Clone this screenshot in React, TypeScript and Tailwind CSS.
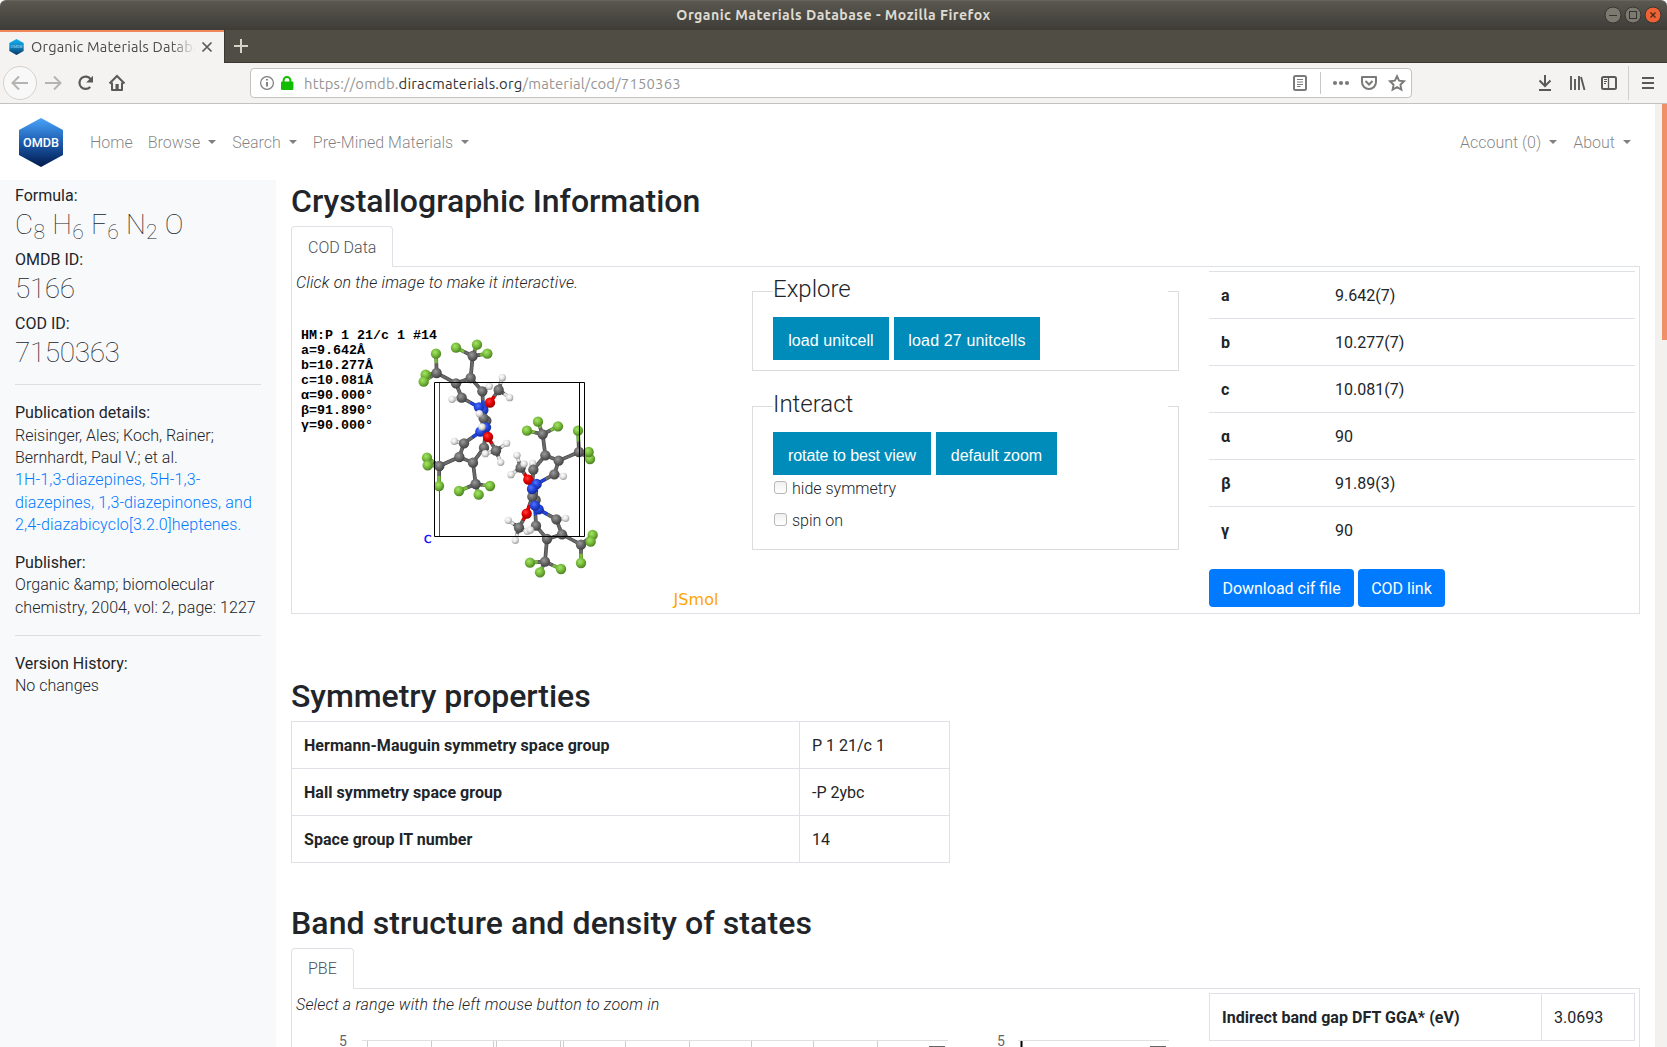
import React from 'react';

type Kind = 'C' | 'F' | 'H' | 'N' | 'O';
type Atom = [Kind, number, number];

/* Atom positions of the four molecules; bonds refer to indices in the same list. */
const ATOMS: Atom[] = [
  ['F', 168, 83], ['F', 231, 74], ['F', 262, 101], ['C', 218, 108], ['F', 108, 101],
  ['C', 110, 159], ['F', 77, 164], ['F', 71, 185], ['C', 168, 190], ['C', 212, 174],
  ['C', 185, 233], ['H', 156, 238], ['C', 247, 214], ['H', 268, 199], ['C', 296, 210],
  ['H', 307, 173], ['H', 329, 233], ['N', 250, 270], ['N', 237, 262], ['O', 270, 248],
  ['C', 259, 302], ['C', 251, 295], ['H', 238, 281],
  ['N', 258, 322], ['N', 241, 335], ['H', 246, 321], ['C', 192, 370], ['H', 163, 364], ['C', 252, 383],
  ['C', 288, 392], ['O', 264, 351], ['H', 320, 370], ['H', 256, 401], ['H', 302, 427],
  ['C', 178, 411], ['C', 219, 428], ['C', 118, 438], ['F', 81, 413], ['F', 83, 436],
  ['F', 117, 498], ['C', 227, 492], ['F', 177, 513], ['F', 270, 498], ['F', 236, 524],
  ['F', 381, 332], ['F', 414, 305], ['F', 474, 319], ['C', 428, 343], ['C', 436, 406],
  ['C', 476, 422], ['C', 537, 396], ['F', 534, 332], ['F', 570, 417], ['F', 566, 396],
  ['C', 463, 463], ['H', 490, 469], ['H', 398, 430], ['C', 400, 449], ['C', 362, 443],
  ['H', 372, 432], ['H', 351, 406], ['H', 333, 464], ['O', 385, 479], ['N', 410, 492],
  ['C', 407, 540], ['C', 397, 530], ['N', 396, 507],
  ['N', 416, 568], ['N', 405, 557], ['O', 380, 581], ['C', 357, 623], ['H', 325, 601],
  ['H', 346, 661], ['H', 382, 634], ['C', 408, 617], ['H', 391, 630], ['C', 469, 598],
  ['H', 497, 595], ['C', 486, 643], ['C', 441, 657], ['C', 543, 674], ['F', 578, 645],
  ['F', 572, 665], ['F', 543, 729], ['C', 435, 725], ['F', 390, 728], ['F', 483, 747], ['F', 420, 757],
];

const BONDS: [number, number][] = [
  [0, 3], [1, 3], [2, 3], [3, 9], [4, 5], [6, 5], [7, 5], [5, 8], [8, 9], [8, 10], [10, 11], [9, 12],
  [12, 13], [10, 18], [12, 17], [14, 15], [14, 16], [14, 19], [19, 17], [17, 20], [21, 22], [18, 21],
  [20, 23], [21, 24], [24, 26], [26, 27], [26, 34], [23, 28], [28, 35], [34, 35], [34, 36], [36, 37],
  [36, 38], [36, 39], [35, 40], [40, 41], [40, 42], [40, 43], [20, 30], [30, 29], [29, 31], [29, 32], [29, 33],
  [44, 47], [45, 47], [46, 47], [47, 48], [48, 49], [49, 50], [50, 51], [50, 52], [50, 53], [49, 54],
  [54, 55], [54, 63], [48, 57], [57, 56], [57, 66], [58, 59], [58, 60], [58, 61], [58, 62], [62, 66], [66, 65],
  [63, 64], [65, 68], [64, 67], [65, 69], [69, 70], [70, 71], [70, 72], [70, 73], [68, 74], [74, 75], [67, 76],
  [76, 77], [76, 78], [78, 79], [74, 79], [78, 80], [80, 81], [80, 82], [80, 83], [79, 84], [84, 85],
  [84, 86], [84, 87],
];

const BASE: Record<Kind, string> = { C: '#6a6a6a', F: '#79bd3c', H: '#e4e4e4', N: '#2445dc', O: '#e80000' };
const EDGE: Record<Kind, string> = { C: '#3f3f3f', F: '#4b8022', H: '#9a9a9a', N: '#132a98', O: '#960000' };
const SHINE: Record<Kind, string> = { C: '#9a9a9a', F: '#a5e466', H: '#ffffff', N: '#5573ff', O: '#ff4040' };
const RADIUS: Record<Kind, number> = { C: 15.5, F: 15.5, H: 11, N: 15.5, O: 15.5 };

const CELL_TEXT = ['HM:P 1 21/c 1 #14', 'a=9.642Å', 'b=10.277Å', 'c=10.081Å', 'α=90.000°', 'β=91.890°', 'γ=90.000°'];

function HalfBond({ x1, y1, x2, y2, kind }: { x1: number; y1: number; x2: number; y2: number; kind: Kind }) {
  return (
    <g>
      <line x1={x1} y1={y1} x2={x2} y2={y2} stroke={EDGE[kind]} strokeWidth={11} />
      <line x1={x1} y1={y1} x2={x2} y2={y2} stroke={BASE[kind]} strokeWidth={7.5} />
    </g>
  );
}

function MoleculeView() {
  return (
    <svg className="block h-[314px] w-[425px]" viewBox="296 295 425 314">
      <defs>
        {(Object.keys(BASE) as Kind[]).map((k) => (
          <radialGradient key={k} id={`atom-${k}`} cx="0.4" cy="0.36" r="0.66">
            <stop offset="0" stopColor={SHINE[k]} />
            <stop offset="0.5" stopColor={BASE[k]} />
            <stop offset="1" stopColor={EDGE[k]} />
          </radialGradient>
        ))}
      </defs>
      <g fontFamily='"Liberation Mono", monospace' fontSize="13.33" fontWeight="700" fill="#000">
        {CELL_TEXT.map((t, i) => (
          <text key={t} x="301" y={339 + i * 15}>{t}</text>
        ))}
      </g>
      <path d="M439.5 383V536" stroke="#008000" />
      <g transform="translate(400 320) scale(0.33333)">
        {BONDS.map(([a, b]) => {
          const [ka, xa, ya] = ATOMS[a];
          const [kb, xb, yb] = ATOMS[b];
          const mx = (xa + xb) / 2;
          const my = (ya + yb) / 2;
          return (
            <g key={`${a}-${b}`}>
              <HalfBond x1={xa} y1={ya} x2={mx} y2={my} kind={ka} />
              <HalfBond x1={mx} y1={my} x2={xb} y2={yb} kind={kb} />
            </g>
          );
        })}
        {ATOMS.map(([k, x, y], i) => (
          <circle key={i} cx={x} cy={y} r={RADIUS[k]} fill={`url(#atom-${k})`} />
        ))}
      </g>
      <g fill="none" stroke="#000" strokeWidth="1">
        <path d="M434.5 382.5H584.5V536.5H434.5Z" />
        <path d="M579.5 383V536" />
      </g>
      <text x="424" y="543" fontFamily='"DejaVu Sans", sans-serif' fontSize="10.5" fill="#0000ff" stroke="#0000ff" strokeWidth="0.4">C</text>
      <text x="673.500" y="605" fontFamily='"DejaVu Sans", sans-serif' fontSize="16" textLength="45" fill="#ffa500">JSmol</text>
    </svg>
  );
}

function Logo({ className, small }: { className: string; small?: boolean }) {
  const id = small ? 'logo-small' : 'logo-large';
  return (
    <svg className={className} viewBox="0 0 44 49">
      <defs>
        <linearGradient id={id} x1="0" y1="0" x2="0" y2="1">
          <stop offset="0" stopColor={small ? '#12b0ee' : '#4aa3fb'} />
          <stop offset="0.5" stopColor={small ? '#0f83c0' : '#1c5cae'} />
          <stop offset="1" stopColor={small ? '#0a3560' : '#021a4c'} />
        </linearGradient>
      </defs>
      <path d="M22 0L44 12V37L22 49L0 37V12Z" fill={`url(#${id})`} />
      <text x="22" y="29" textAnchor="middle" fontFamily="Roboto, sans-serif" fontSize="13" fontWeight={small ? 400 : 500} textLength="36" lengthAdjust="spacingAndGlyphs" fill={small ? '#9fd0ee' : '#fff'}>OMDB</text>
    </svg>
  );
}

function TitleBar() {
  return (
    <div className="bg-white">
      <div className="relative flex h-[30px] items-center justify-center rounded-t-[6px] border-t border-[#66645c] bg-linear-to-b from-[#5a5850] to-[#3d3c37]">
        <div className="mb-[2px] text-center text-[14.1px] leading-[20px] font-bold tracking-[0.48px] whitespace-nowrap text-[#dfdbd2] font-[Ubuntu,'Noto_Sans',sans-serif]">
          Organic Materials Database - Mozilla Firefox
        </div>
        <svg className="absolute top-[5px] right-[4px] h-[18px] w-[60px]" viewBox="0 0 60 18" fill="none">
          <circle cx="10" cy="9" r="8" fill="#7b7970" stroke="#35342f" />
          <path d="M6 9.500H14" stroke="#35342f" />
          <circle cx="30" cy="9" r="8" fill="#7b7970" stroke="#35342f" />
          <rect x="26.500" y="5.500" width="7" height="7" stroke="#35342f" />
          <circle cx="50" cy="9" r="8" fill="#ee6235" stroke="#35342f" />
          <path d="M47.500 6.500L52.500 11.500M52.500 6.500L47.500 11.500" stroke="#4d2a1a" strokeWidth="1.400" />
        </svg>
      </div>
    </div>
  );
}

function TabStrip() {
  return (
    <div className="flex h-[33px] border-b border-[#3a3833] bg-[#504d45]">
      <div className="-mb-px flex h-[33px] w-[224px] items-center border-t-2 border-[#f0875b] bg-[#f4f3f2] shadow-[1px_0_0_#3a3833,0_-1px_0_#46443e]">
        <Logo small className="mb-px ml-[9px] h-[16px] w-[15px]" />
        <div className="mb-px ml-[7px] w-[166px] overflow-hidden text-[14.5px] leading-[20px] tracking-[0.2px] whitespace-nowrap text-[#4a4a4a] mask-r-from-84% mask-r-to-99% font-[Ubuntu,'Noto_Sans',sans-serif]">
          Organic Materials Database
        </div>
        <svg className="mb-px ml-[4px] h-[12px] w-[12px]" viewBox="0 0 12 12" fill="none" stroke="#5a5957" strokeWidth="1.700">
          <path d="M1.500 1.500L10.500 10.500M10.500 1.500L1.500 10.500" />
        </svg>
      </div>
      <svg className="mt-[8px] ml-[10px] h-[15px] w-[15px]" viewBox="0 0 15 15" stroke="#d5d2c8" strokeWidth="2">
        <path d="M7 1V15M0 8H14" />
      </svg>
    </div>
  );
}

function Toolbar() {
  return (
    <div className="flex h-[41px] items-center border-b border-[#c3c2c0] bg-[#f4f3f2]">
      <svg className="h-[36px] w-[130px]" viewBox="0 65 130 36" fill="none">
        <circle cx="20" cy="83" r="16.500" fill="#f9f8f8" stroke="#d3d2d0" />
        <path d="M28 83H13M19 76.500L12.500 83L19 89.500" stroke="#b4b3b2" strokeWidth="2" />
        <path d="M45 83H60M54 76.500L60.500 83L54 89.500" stroke="#b4b3b2" strokeWidth="2" />
        <path d="M90.800 79.300A6.200 6.200 0 1 0 90.200 87" stroke="#5a5957" strokeWidth="2.200" />
        <path d="M93 75.800V82.500H86.200Z" fill="#5a5957" />
        <path d="M109.500 83.500L117 76L124.500 83.500" stroke="#5a5957" strokeWidth="2" />
        <path d="M112 82.500V90H122V82.500" stroke="#5a5957" strokeWidth="2" strokeLinejoin="round" />
        <rect x="115.500" y="84" width="3.200" height="6" fill="#5a5957" />
      </svg>
      <div className="ml-[120px] flex h-[30px] w-[1162px] items-center rounded-[4px] border border-[#c3c2c0] bg-white">
        <svg className="ml-[9px] h-[16px] w-[34px]" viewBox="0 0 34 16" fill="none">
          <circle cx="7" cy="8" r="6.400" stroke="#7d7d7d" strokeWidth="1.200" />
          <path d="M7 7V11.500M7 4V5.600" stroke="#6f6f6f" strokeWidth="1.700" />
          <rect x="21" y="6.500" width="12.400" height="8.500" rx="1" fill="#12bc00" />
          <path d="M23.600 7.500V5.300A3.400 3.400 0 0 1 30.400 5.300V7.500" stroke="#12bc00" strokeWidth="2" />
        </svg>
        <div className="mt-px ml-[10px] flex-1 text-[14.8px] leading-[20px] tracking-[0.21px] whitespace-nowrap text-[#969594] font-[Ubuntu,'Noto_Sans',sans-serif]">
          https://omdb.<span className="text-[#2e3436]">diracmaterials.org</span>/material/cod/7150363
        </div>
        <svg className="h-[26px] w-[120px]" viewBox="1291 70 120 26" fill="none" stroke="#7b7a79">
          <rect x="1294" y="76" width="12" height="14" rx="1.500" strokeWidth="2" />
          <path d="M1297 79.500H1303M1297 82H1303M1297 84.500H1303M1297 86.500H1300.500" />
          <path d="M1320.500 72V94" stroke="#c8c7c5" />
          <g fill="#7b7a79" stroke="none">
            <circle cx="1335" cy="83" r="2.100" />
            <circle cx="1341" cy="83" r="2.100" />
            <circle cx="1347" cy="83" r="2.100" />
          </g>
          <path d="M1362 77H1376V82A7 7 0 0 1 1362 82Z" strokeWidth="2" strokeLinejoin="round" />
          <path d="M1365.500 81L1369 84.500L1372.500 81" strokeWidth="2" />
          <path d="M1397 76.200L1399.100 80.700L1404 81.300L1400.400 84.700L1401.400 89.700L1397 87.200L1392.600 89.700L1393.600 84.700L1390 81.300L1394.900 80.700Z" strokeWidth="1.900" />
        </svg>
      </div>
      <svg className="ml-[120px] h-[36px] w-[135px]" viewBox="1532 65 135 36" fill="none" stroke="#5a5957" strokeWidth="2">
        <path d="M1545 75V86M1539.500 80.500L1545 86L1550.500 80.500M1539 90H1551" />
        <path d="M1571 76V90M1575 79V90M1579 76V90M1581 77L1584.500 90" strokeWidth="1.900" />
        <rect x="1602" y="77" width="14" height="12" rx="1.500" />
        <path d="M1608.500 77V89" strokeWidth="1.300" />
        <path d="M1604 79.500H1607M1604 81.500H1607M1604 83.500H1606" strokeWidth="1" />
        <path d="M1628.500 66V100" stroke="#d0cfcd" strokeWidth="1" />
        <path d="M1642 78H1654M1642 83H1654M1642 88H1654" />
      </svg>
    </div>
  );
}

function NavLink({ children, caret, className = 'px-2' }: { children: string; caret?: boolean; className?: string }) {
  return (
    <a className={`flex items-center whitespace-nowrap text-black/50 ${className}`}>
      <span className="pt-[2px]">{children}</span>
      {caret && <span className="ml-[8px] border-x-[4.8px] border-t-[4.8px] border-x-transparent border-t-black/50" />}
    </a>
  );
}

function Navbar() {
  return (
    <nav className="flex h-[76px] items-center bg-white pr-[16px] pl-[19px] font-light">
      <Logo className="mr-[19px] h-[49px] w-[44px]" />
      <NavLink>Home</NavLink>
      <NavLink caret className="pr-2 pl-[7px]">Browse</NavLink>
      <NavLink caret className="px-2">Search</NavLink>
      <NavLink caret className="px-2">Pre-Mined Materials</NavLink>
      <div className="flex-1" />
      <NavLink caret>Account (0)</NavLink>
      <NavLink caret>About</NavLink>
    </nav>
  );
}

function Label({ children }: { children: string }) {
  return <div className="leading-[22.4px] font-normal">{children}</div>;
}

function Big({ children, className = 'tracking-[-0.4px]' }: { children: React.ReactNode; className?: string }) {
  return <div className={`mb-[8px] h-[33.600px] pt-px text-[28px] leading-[33.600px] font-thin ${className}`}>{children}</div>;
}

function Sub({ children }: { children: string }) {
  return <sub className="relative bottom-[-0.25em] align-baseline text-[75%] leading-none">{children}</sub>;
}

function Sidebar() {
  return (
    <aside className="w-[276px] shrink-0 bg-[#f8f9fb] pt-[4.500px] pr-[14px] pl-[15px] leading-[22.4px] font-light text-[#212529]">
      <Label>Formula:</Label>
      <Big className="tracking-[0.28px]">C<Sub>8</Sub> H<Sub>6</Sub> F<Sub>6</Sub> N<Sub>2</Sub> O</Big>
      <Label>OMDB ID:</Label>
      <Big>5166</Big>
      <Label>COD ID:</Label>
      <Big>7150363</Big>
      <hr className="mt-[15px] mr-px mb-[17px] border-[#dcdee0]" />
      <Label>Publication details:</Label>
      <div className="pt-[1px]">Reisinger, Ales; Koch, Rainer;<br />Bernhardt, Paul V.; et al.</div>
      <a className="-mt-[0.600px] block tracking-[0.13px] whitespace-nowrap text-[#007bff]">
        1H-1,3-diazepines, 5H-1,3-<br />diazepines, 1,3-diazepinones, and<br />2,4-diazabicyclo[3.2.0]heptenes.
      </a>
      <div className="pt-[16px]"><Label>Publisher:</Label></div>
      <div className="-mt-[0.300px] tracking-[0.06px] whitespace-nowrap">Organic &amp;amp; biomolecular<br />chemistry, 2004, vol: 2, page: 1227</div>
      <hr className="mt-[16px] mr-px mb-[17px] border-[#dcdee0]" />
      <Label>Version History:</Label>
      <div className="-mt-[0.600px]">No changes</div>
    </aside>
  );
}

function Heading({ children, className = '' }: { children: string; className?: string }) {
  return <h2 className={`h-[38px] text-[32px] leading-[38px] font-medium whitespace-nowrap ${className}`}>{children}</h2>;
}

function Tab({ children, className }: { children: string; className: string }) {
  return (
    <div className={`relative z-10 -mb-px flex h-[41px] w-fit items-center rounded-t-[4px] border border-b-0 border-[#dee2e6] bg-white px-4 font-light text-[#495057] ${className}`}>
      {children}
    </div>
  );
}

function JmolButton({ children, className }: { children: string; className: string }) {
  return (
    <button className={`h-[43px] bg-[#008cba] pt-[4px] text-center text-[16px] whitespace-nowrap text-white font-['Liberation_Sans',Arial,sans-serif] ${className}`}>
      {children}
    </button>
  );
}

function Group({ title, className, children }: { title: string; className: string; children: React.ReactNode }) {
  return (
    <fieldset className={`w-[427px] border border-[#dcdcdc] px-[10px] font-light ${className}`}>
      <legend className="ml-[10px] h-[36px] w-[395px] text-[24px] leading-[32px]">{title}</legend>
      <div className="ml-[10px] pt-[8px]">{children}</div>
    </fieldset>
  );
}

function Check({ children }: { children: string }) {
  return (
    <label className="flex h-[32px] items-start gap-[5px] pl-px">
      <span className="mt-[6px] h-[13px] w-[13px] rounded-[3px] border-[1.500px] border-[#b9b7b5] bg-linear-to-b from-[#f0f0f0] to-white" />
      <span className="leading-[27px]">{children}</span>
    </label>
  );
}

const CELL_ROWS: [string, string][] = [
  ['a', '9.642(7)'], ['b', '10.277(7)'], ['c', '10.081(7)'], ['α', '90'], ['β', '91.89(3)'], ['γ', '90'],
];

const SYMMETRY_ROWS: [string, string][] = [
  ['Hermann-Mauguin symmetry space group', 'P 1 21/c 1'],
  ['Hall symmetry space group', '-P 2ybc'],
  ['Space group IT number', '14'],
];

function BandCharts() {
  return (
    <svg className="block h-[28px] w-[880px]" viewBox="296 1019 880 28" fill="none">
      <g fontFamily="Roboto, sans-serif" fontSize="14" fill="#666">
        <text x="339" y="1046">5</text>
        <text x="997" y="1046">5</text>
      </g>
      <path d="M362 1040.500H948M1018 1040.500H1169" stroke="#e0e0e0" />
      <path d="M367.500 1041V1047M431.500 1041V1047M493.500 1041V1047M496.500 1041V1047M560.500 1041V1047M563.500 1041V1047M625.500 1041V1047M689.500 1041V1047M751.500 1041V1047M813.500 1041V1047M877.500 1041V1047" stroke="#ccc" />
      <path d="M1021.500 1041V1047" stroke="#000" strokeWidth="2" />
      <path d="M929 1046.500H945M1150 1046.500H1166" stroke="#666" />
    </svg>
  );
}

function Main() {
  return (
    <main className="ml-[15px] w-[1349px] shrink-0 pt-[2px] text-[#212529]">
      <Heading>Crystallographic Information</Heading>
      <div className="h-[6px]" />
      <Tab className="pt-[2px]">COD Data</Tab>
      <section className="flex h-[348px] border border-[#dee2e6]">
        <div className="w-[460px] pl-[4px]">
          <div className="pt-[4px] leading-6 font-light tracking-[0.19px] italic">Click on the image to make it interactive.</div>
          <MoleculeView />
        </div>
        <div className="w-[457px] pt-[6px]">
          <Group title="Explore" className="h-[98px]">
            <div className="flex gap-[5px]">
              <JmolButton className="w-[116px] tracking-[0.08px]">load unitcell</JmolButton>
              <JmolButton className="w-[146px] tracking-[0.15px]">load 27 unitcells</JmolButton>
            </div>
          </Group>
          <Group title="Interact" className="mt-[17px] h-[162px]">
            <div className="flex gap-[5px]">
              <JmolButton className="w-[158px] tracking-[-0.11px]">rotate to best view</JmolButton>
              <JmolButton className="w-[121px] tracking-[-0.02px]">default zoom</JmolButton>
            </div>
            <Check>hide symmetry</Check>
            <Check>spin on</Check>
          </Group>
        </div>
        <div className="w-[426px] pt-[4px]">
          {CELL_ROWS.map(([k, v]) => (
            <div key={k} className="flex h-[47px] items-center border-t border-[#dee2e6] pt-[2px] pl-[12px]">
              <div className="w-[114px] font-bold">{k}</div>
              <div>{v}</div>
            </div>
          ))}
          <div className="flex gap-[4px] pt-[16px] text-white">
            <button className="h-[38px] w-[145px] rounded-[4px] bg-[#007bff] pt-[2px]">Download cif file</button>
            <button className="h-[38px] w-[87px] rounded-[4px] bg-[#007bff] pt-[2px]">COD link</button>
          </div>
        </div>
      </section>
      <div className="h-[63px]" />
      <Heading className="tracking-[-0.05px]">Symmetry properties</Heading>
      <div className="mt-[6px] w-[659px] border border-b-0 border-[#dee2e6]">
        {SYMMETRY_ROWS.map(([k, v]) => (
          <div key={k} className="flex h-[47px] border-b border-[#dee2e6] leading-[48px]">
            <div className="w-[508px] border-r border-[#dee2e6] pl-[12px] font-bold tracking-[0.05px]">{k}</div>
            <div className="pl-[12px]">{v}</div>
          </div>
        ))}
      </div>
      <div className="h-[41px]" />
      <Heading className="tracking-[0.09px]">Band structure and density of states</Heading>
      <div className="h-[6px]" />
      <Tab className="pt-0">PBE</Tab>
      <section className="flex h-[348px] border border-[#dee2e6]">
        <div className="w-[917px] pl-[4px]">
          <div className="pt-[4px] pb-[2px] leading-6 font-light tracking-[0.18px] italic">Select a range with the left mouse button to zoom in</div>
          <BandCharts />
        </div>
        <div className="mt-[4px] flex h-[48px] w-[426px] border border-[#dee2e6] leading-[48px]">
          <div className="w-[332px] border-r border-[#dee2e6] pl-[12px] font-bold tracking-[0.05px]">Indirect band gap DFT GGA* (eV)</div>
          <div className="pl-[12px]">3.0693</div>
        </div>
      </section>
    </main>
  );
}

export default function App() {
  return (
    <div className="flex h-[1047px] w-[1667px] flex-col overflow-hidden bg-white text-[16px] font-[Roboto,sans-serif]">
      <TitleBar />
      <TabStrip />
      <Toolbar />
      <div className="flex min-h-0 flex-1">
        <div className="flex w-[1655px] flex-col overflow-hidden">
          <Navbar />
          <div className="flex min-h-0 flex-1 items-stretch">
            <Sidebar />
            <Main />
          </div>
        </div>
        <div className="flex w-[12px] justify-end bg-[#f2f1f0]">
          <div className="h-[236px] w-[5px] bg-[#f18f69]" />
        </div>
      </div>
    </div>
  );
}
